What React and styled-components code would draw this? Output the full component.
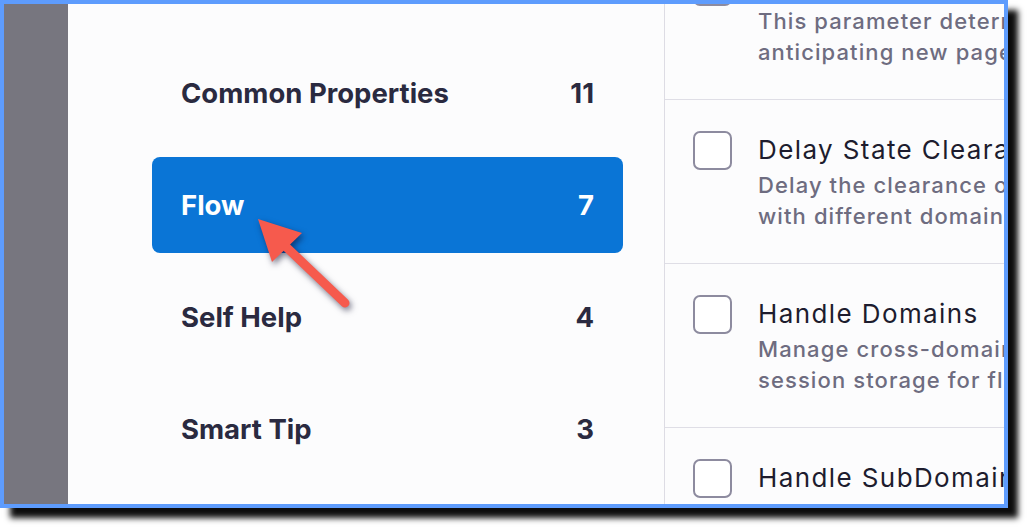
import React from 'react';
import styled, { createGlobalStyle } from 'styled-components';

const GlobalStyle = createGlobalStyle`
  html, body {
    margin: 0;
    padding: 0;
    background: #ffffff;
  }
  * {
    box-sizing: border-box;
  }
`;

// layout
const Page = styled.div`
  position: relative;
  width: 1028px;
  height: 528px;
  font-family: Inter, 'Noto Sans', sans-serif;
`;

const Frame = styled.div`
  display: flex;
  width: 1008px;
  height: 508px;
  border: 4px solid #5e9cfd;
  box-shadow: 10px 10px 6px rgba(0, 0, 0, 0.95);
  overflow: hidden;
  background: #fcfcfd;
`;

const Backdrop = styled.div`
  flex: 0 0 64px;
  background: #77767f;
`;

// sidebar
const Sidebar = styled.nav`
  flex: 0 0 597px;
  display: flex;
  flex-direction: column;
  gap: 16px;
  padding: 41px 41px 0 84px;
  background: #fcfcfd;
  border-right: 1px solid #dddce4;
`;

const NavItem = styled.div`
  display: flex;
  align-items: center;
  justify-content: space-between;
  height: 96px;
  padding: 0 29px;
  border-radius: 8px;
  font-size: 27.5px;
  font-weight: 700;
  color: ${p => (p.$active ? '#ffffff' : '#2a2a40')};
  background: ${p => (p.$active ? '#0a75d6' : 'transparent')};
`;

// settings list (scrolled, first row partly hidden)
const Settings = styled.div`
  flex: 1;
  min-width: 0;
  margin-top: -68px;
`;

const SettingRow = styled.div`
  display: flex;
  gap: 26px;
  padding: 30px 0 31px 28px;
  border-bottom: 1px solid #dfdee6;
`;

const Checkbox = styled.span`
  flex: 0 0 39px;
  height: 39px;
  margin-top: 1px;
  border: 2px solid #8d8b9f;
  border-radius: 7px;
  background: #ffffff;
`;

const SettingText = styled.div`
  white-space: nowrap;
`;

const SettingTitle = styled.div`
  font-size: 26px;
  line-height: 40px;
  font-weight: 400;
  letter-spacing: 1.4px;
  color: #1d1c2e;
`;

const SettingDesc = styled.div`
  font-size: 22px;
  line-height: 31px;
  font-weight: 500;
  letter-spacing: 1.1px;
  color: #6e6c80;
`;

const ArrowLayer = styled.svg`
  position: absolute;
  top: 0;
  left: 0;
  pointer-events: none;
  filter: drop-shadow(2px 3px 3px rgba(10, 10, 40, 0.55));
`;

const NAV = [
  { label: 'Common Properties', count: 11 },
  { label: 'Flow', count: 7, active: true },
  { label: 'Self Help', count: 4 },
  { label: 'Smart Tip', count: 3 },
];

const SETTINGS = [
  {
    title: 'Page Load Timeout',
    desc: ['This parameter determines the wait time before', 'anticipating new page loads in a flow.'],
  },
  {
    title: 'Delay State Clearance',
    desc: ['Delay the clearance of the flow state on pages', 'with different domains.'],
  },
  {
    title: 'Handle Domains',
    desc: ['Manage cross-domain flows by using', 'session storage for flow state.'],
  },
  {
    title: 'Handle SubDomains',
    desc: ['Share the flow state across subdomains', 'of the same root domain.'],
  },
];

const App = () => (
  <Page>
    <GlobalStyle />
    <Frame>
      <Backdrop />
      <Sidebar>
        {NAV.map(item => (
          <NavItem key={item.label} $active={item.active}>
            <span>{item.label}</span>
            <span>{item.count}</span>
          </NavItem>
        ))}
      </Sidebar>
      <Settings>
        {SETTINGS.map(s => (
          <SettingRow key={s.title}>
            <Checkbox />
            <SettingText>
              <SettingTitle>{s.title}</SettingTitle>
              {s.desc.map(line => (
                <SettingDesc key={line}>{line}</SettingDesc>
              ))}
            </SettingText>
          </SettingRow>
        ))}
      </Settings>
    </Frame>
    <ArrowLayer width="1028" height="528" viewBox="0 0 1028 528">
      <line x1="282" y1="243" x2="345" y2="303" stroke="#f65a4d" strokeWidth="9" strokeLinecap="round" />
      <polygon points="258,219 302,233 272,262" fill="#f65a4d" />
    </ArrowLayer>
  </Page>
);

export default App;
